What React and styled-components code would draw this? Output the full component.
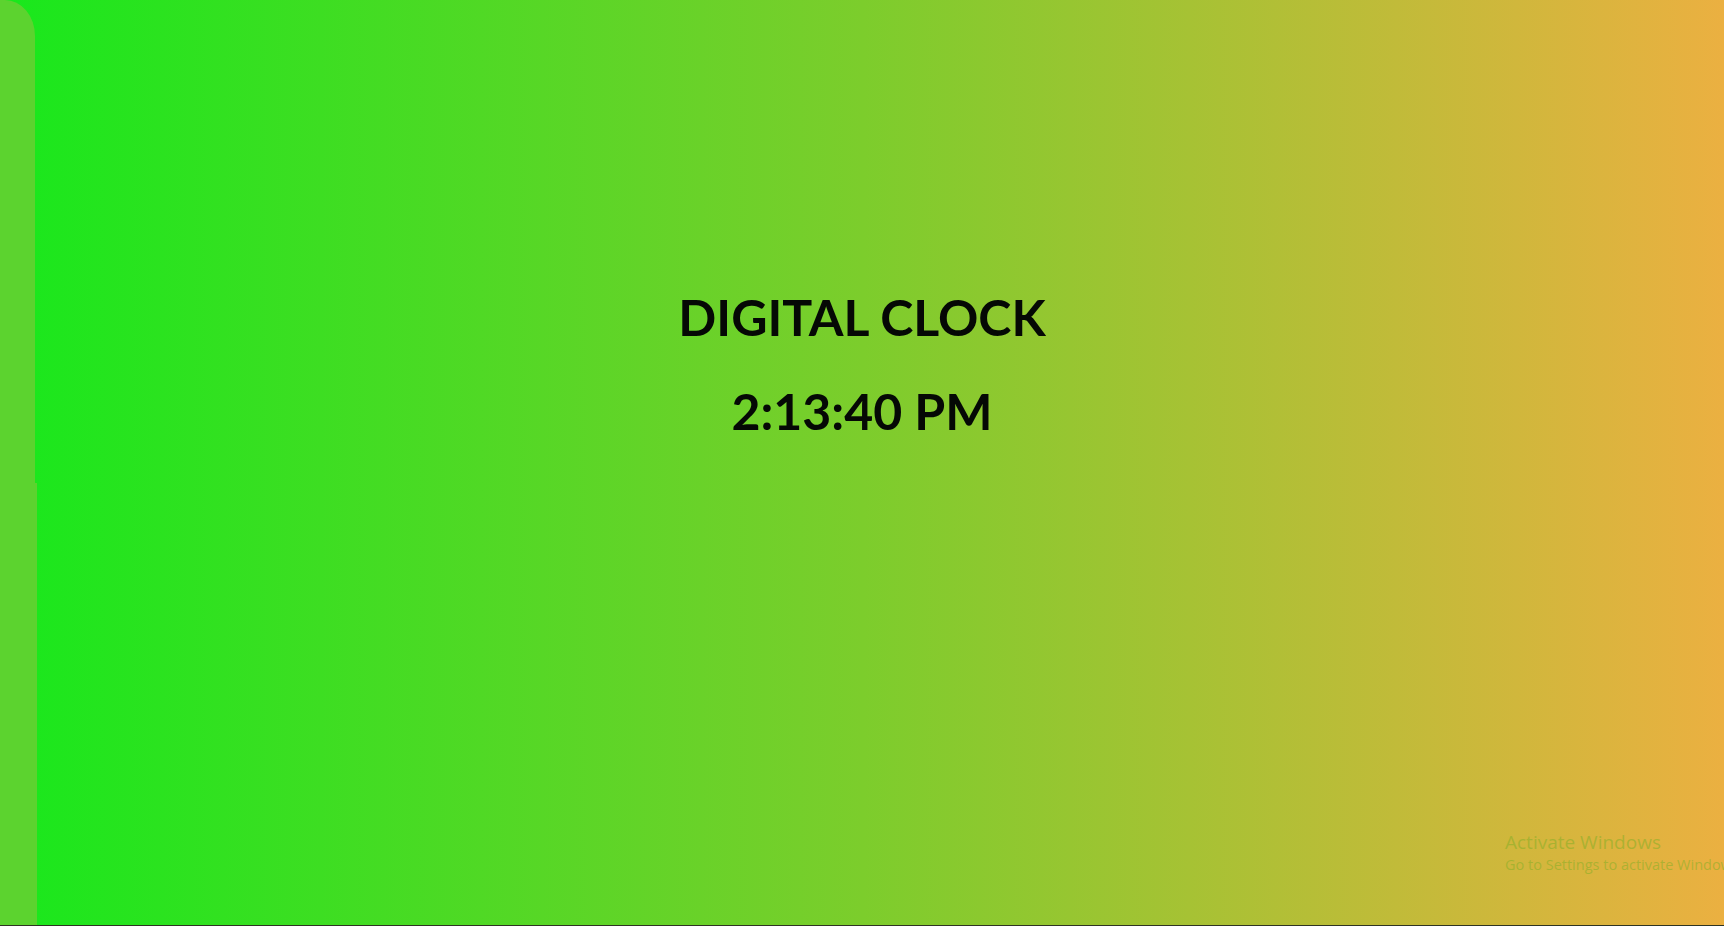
import React from 'react'
import styled, { createGlobalStyle } from "styled-components"

const GlobalStyle = createGlobalStyle`
  html, body {
    margin: 0;
    padding: 0;
    background: #2e3322;
  }
  body {
    font-family: Lato, "Open Sans", sans-serif;
  }
`

const App = () => {
  // frozen at the time shown in the screenshot
  const [time] = React.useState("2:13:40 PM")

  return (
    <>
      <GlobalStyle />
      <Page>
        <SideStrip>
          <StripTop />
          <StripBottom />
        </SideStrip>
        <Clock>
          <Title>DIGITAL CLOCK</Title>
          <Time>{time}</Time>
        </Clock>
        <Watermark>
          <WmTitle>Activate Windows</WmTitle>
          <WmText>Go to Settings to activate Windows.</WmText>
        </Watermark>
      </Page>
    </>
  )
}

export default App

const Page = styled.div`
  position: relative;
  height: 925px;
  overflow: hidden;
  background: linear-gradient(to right, #18e81c 0%, #7ccd2c 50%, #ebb041 100%);
`

const SideStrip = styled.div`
  position: absolute;
  top: 0;
  left: 0;
  bottom: 0;
  display: flex;
  flex-direction: column;
`

const StripTop = styled.div`
  width: 35px;
  height: 483px;
  background: #5cd32f;
  border-top-right-radius: 30px 36px;
`

const StripBottom = styled.div`
  width: 37px;
  flex: 1;
  background: #5cd32f;
`

const Clock = styled.div`
  display: flex;
  flex-direction: column;
  align-items: center;
  gap: 34px;
  padding-top: 287px;
`

const Title = styled.h1`
  margin: 0;
  font-size: 50px;
  font-weight: 700;
  line-height: 60px;
  color: #050805;
`

const Time = styled.h2`
  margin: 0;
  font-size: 50px;
  font-weight: 700;
  line-height: 60px;
  color: #050805;
`

const Watermark = styled.div`
  position: absolute;
  left: 1505px;
  top: 830px;
  white-space: nowrap;
  font-family: "Open Sans", "Noto Sans", sans-serif;
  color: rgba(140, 175, 40, 0.6);
`

const WmTitle = styled.div`
  font-size: 19px;
  line-height: 25px;
`

const WmText = styled.div`
  font-size: 14.5px;
  line-height: 19px;
`
